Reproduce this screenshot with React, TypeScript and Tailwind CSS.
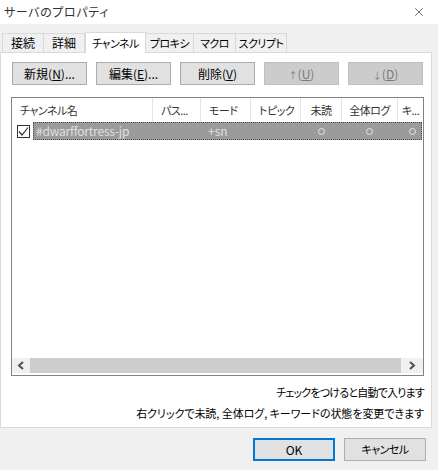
import React from "react";
import { X } from "lucide-react";

const font = { fontFamily: '"Noto Sans CJK JP", "Noto Sans", sans-serif' };

const tabs = [
  { label: "接続", w: "w-[42px] text-[12px]" },
  { label: "詳細", w: "w-[42px] text-[12px]" },
  { label: "チャンネル", w: "w-[61px] text-[11px] tracking-[-0.5px]", active: true },
  { label: "プロキシ", w: "w-[49px] text-[11px] tracking-[-0.5px]" },
  { label: "マクロ", w: "w-[43px] text-[11px] tracking-[-0.5px]" },
  { label: "スクリプト", w: "w-[52px] text-[11px] tracking-[-0.5px]" },
];

const columns = [
  { label: "チャンネル名", w: "w-[141px]", left: true },
  { label: "パス...", w: "w-[48px]", left: true },
  { label: "モード", w: "w-[50px]", left: true },
  { label: "トピック", w: "w-[50px]", left: true },
  { label: "未読", w: "w-[41px]" },
  { label: "全体ログ", w: "w-[56px]" },
  { label: "キ...", w: "flex-1" },
];

function Btn({ children, disabled }: { children: React.ReactNode; disabled?: boolean }) {
  return (
    <div
      className={
        "w-[75px] h-[23px] flex items-center justify-center border text-[12px] " +
        (disabled ? "bg-[#cccccc] border-[#bfbfbf] text-[#7a7a7a]" : "bg-[#e1e1e1] border-[#adadad] text-black")
      }
    >
      {children}
    </div>
  );
}

function Dot() {
  return <div className="w-[7px] h-[7px] rounded-full border border-[#e8e8e8]" />;
}

export default function App() {
  return (
    <div className="w-[438px] h-[470px] bg-[#f0f0f0] flex flex-col overflow-hidden [font-feature-settings:'palt']" style={font}>
      <div className="h-[24px] bg-white flex items-center justify-between pl-[4px] pr-[12px] text-[12px] text-[#333333]">
        <span className="tracking-[0.6px]">サーバのプロパティ</span>
        <X size={14} strokeWidth={1} className="text-black" />
      </div>

      <div className="flex items-end h-[28px] pl-[2px]">
        {tabs.map((t) => (
          <div
            key={t.label}
            className={
              "flex items-center justify-center whitespace-nowrap text-black border border-[#d9d9d9] " +
              t.w +
              (t.active ? " h-[21px] bg-white border-b-0 relative top-[1px] z-10" : " h-[19px] bg-[#f0f0f0] border-b-0 -ml-px first:ml-0")
            }
          >
            {t.label}
          </div>
        ))}
      </div>

      <div className="w-[432px] h-[376px] bg-white border border-[#d9d9d9] flex flex-col pl-[10px] pr-[7px] pt-[9px]">
        <div className="flex gap-[9px] pl-[1px]">
          <Btn>
            <span>
              新規(<u>N</u>)...
            </span>
          </Btn>
          <Btn>
            <span>
              編集(<u>E</u>)...
            </span>
          </Btn>
          <Btn>
            <span>
              削除(<u>V</u>)
            </span>
          </Btn>
          <Btn disabled>
            <span>
              <span className="text-[9px]">↑</span>(<u>U</u>)
            </span>
          </Btn>
          <Btn disabled>
            <span>
              <span className="text-[9px]">↓</span>(<u>D</u>)
            </span>
          </Btn>
        </div>

        <div className="mt-[12px] w-[413px] h-[279px] border border-[#828282] flex flex-col">
          <div className="flex h-[24px] shrink-0 text-[11px] tracking-[-0.5px] text-[#333333]">
            {columns.map((c) => (
              <div
                key={c.label}
                className={
                  "flex items-center border-r border-[#e5e5e5] last:border-r-0 whitespace-nowrap " +
                  c.w +
                  (c.left ? " pl-[8px]" : " justify-center")
                }
              >
                {c.label}
              </div>
            ))}
          </div>

          <div className="flex h-[18px] shrink-0 items-center">
            <div className="w-[21px] flex justify-end pr-[3px]">
              <div className="w-[13px] h-[13px] border border-[#333333] bg-white flex items-center justify-center">
                <svg width="11" height="11" viewBox="0 0 11 11" fill="none">
                  <path d="M1 5.5 L4 9 L10 1.5" stroke="#333333" strokeWidth="1.2" />
                </svg>
              </div>
            </div>
            <div className="w-[389px] h-[18px] bg-[#9b9b9b] border border-dotted border-[#4a4a4a] flex items-center text-[12px] text-[#e0e0e0]">
              <span className="w-[167px] pl-[2px] tracking-[-0.2px] whitespace-nowrap">#dwarffortress-jp</span>
              <span className="w-[117px] pl-[7px]">+sn</span>
              <Dot />
              <div className="w-[41px]" />
              <Dot />
              <div className="w-[36px]" />
              <Dot />
            </div>
          </div>

          <div className="flex-1" />

          <div className="h-[15px] mb-[2px] shrink-0 flex items-stretch">
            <div className="w-[18px] bg-[#f0f0f0] flex items-center justify-center">
              <svg width="8" height="9" viewBox="0 0 8 9" fill="none">
                <path d="M6 1 L2 4.5 L6 8" stroke="#505050" strokeWidth="2" />
              </svg>
            </div>
            <div className="flex-1 bg-[#cdcdcd]" />
            <div className="w-[22px] bg-[#f0f0f0] flex items-center justify-center">
              <svg width="8" height="9" viewBox="0 0 8 9" fill="none">
                <path d="M2 1 L6 4.5 L2 8" stroke="#505050" strokeWidth="2" />
              </svg>
            </div>
          </div>
        </div>

        <div className="mt-[6px] w-[413px] text-right text-[11px] leading-[21px] text-black whitespace-nowrap">
          <div className="tracking-[-0.8px]">チェックをつけると自動で入ります</div>
          <div className="tracking-[-0.05px]">右クリックで未読, 全体ログ, キーワードの状態を変更できます</div>
        </div>
      </div>

      <div className="flex justify-end gap-[9px] pr-[12px] pt-[10px]">
        <div className="w-[82px] h-[23px] bg-[#e1e1e1] border-2 border-[#0078d7] flex items-center justify-center text-[12px] text-black">
          OK
        </div>
        <div className="w-[82px] h-[23px] bg-[#e1e1e1] border border-[#adadad] flex items-center justify-center text-[11px] tracking-[-0.5px] text-black">
          キャンセル
        </div>
      </div>
    </div>
  );
}
